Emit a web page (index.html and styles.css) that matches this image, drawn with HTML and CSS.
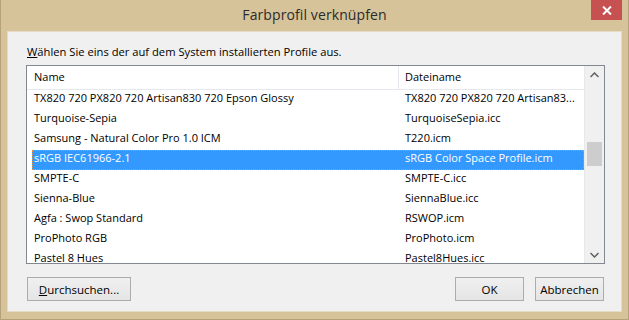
FILE: index.html
```html
<!DOCTYPE html>
<html>
<head>
    <meta charset="UTF-8">
    <title>Farbprofil verknüpfen</title>
    <link rel="stylesheet" href="styles.css">
</head>
<body>
    <div class="window">
        <div class="titlebar">
            <span></span>
            <span class="title">Farbprofil verknüpfen</span>
            <button class="close" type="button">
                <svg width="10" height="9" viewBox="0 0 10 9">
                    <path d="M1 0.5 L9 8.5 M9 0.5 L1 8.5" stroke="#fff" stroke-width="2"/>
                </svg>
            </button>
        </div>

        <div class="client">
            <p class="prompt"><u>W</u>ählen Sie eins der auf dem System installierten Profile aus.</p>

            <div class="listbox">
                <div class="list-main">
                    <div class="list-header">
                        <div class="col-name">Name</div>
                        <div class="col-file">Dateiname</div>
                    </div>
                    <div class="list-rows">
                        <div class="row"><span class="cell-name">TX820 720 PX820 720 Artisan830 720 Epson Glossy</span><span class="cell-file">TX820 720 PX820 720 Artisan83...</span></div>
                        <div class="row"><span class="cell-name">Turquoise-Sepia</span><span class="cell-file">TurquoiseSepia.icc</span></div>
                        <div class="row"><span class="cell-name">Samsung - Natural Color Pro 1.0 ICM</span><span class="cell-file">T220.icm</span></div>
                        <div class="row selected"><span class="cell-name">sRGB IEC61966-2.1</span><span class="cell-file">sRGB Color Space Profile.icm</span></div>
                        <div class="row"><span class="cell-name">SMPTE-C</span><span class="cell-file">SMPTE-C.icc</span></div>
                        <div class="row"><span class="cell-name">Sienna-Blue</span><span class="cell-file">SiennaBlue.icc</span></div>
                        <div class="row"><span class="cell-name">Agfa : Swop Standard</span><span class="cell-file">RSWOP.icm</span></div>
                        <div class="row"><span class="cell-name">ProPhoto RGB</span><span class="cell-file">ProPhoto.icm</span></div>
                        <div class="row"><span class="cell-name">Pastel 8 Hues</span><span class="cell-file">Pastel8Hues.icc</span></div>
                    </div>
                </div>
                <div class="scrollbar">
                    <div class="arrow">
                        <svg width="9" height="6" viewBox="0 0 9 6"><path d="M0.5 5 L4.5 1 L8.5 5" fill="none" stroke="#606060" stroke-width="1.5"/></svg>
                    </div>
                    <div class="track">
                        <div class="thumb"></div>
                    </div>
                    <div class="arrow">
                        <svg width="9" height="6" viewBox="0 0 9 6"><path d="M0.5 1 L4.5 5 L8.5 1" fill="none" stroke="#606060" stroke-width="1.5"/></svg>
                    </div>
                </div>
            </div>

            <div class="buttons">
                <button type="button" class="btn btn-browse"><u>D</u>urchsuchen...</button>
                <span class="spacer"></span>
                <button type="button" class="btn">OK</button>
                <button type="button" class="btn">Abbrechen</button>
            </div>
        </div>
    </div>
</body>
</html>
```

FILE: styles.css
```css
body {
    margin: 0;
    padding: 0;
    font-family: 'Open Sans', 'Noto Sans', sans-serif;
    font-size: 11px;
    color: #000;
}

.window {
    width: 629px;
    height: 320px;
    box-sizing: border-box;
    background-color: #d6c399;
    border: 1px solid #b5a27a;
    border-top: none;
    display: flex;
    flex-direction: column;
}

.titlebar {
    height: 31px;
    display: grid;
    grid-template-columns: 1fr auto 1fr;
    align-items: start;
}

.title {
    font-size: 14px;
    color: #2b2b2b;
    padding-top: 5px;
    letter-spacing: 0.1px;
}

.close {
    justify-self: end;
    margin-right: 6px;
    width: 31px;
    height: 20px;
    border: none;
    padding: 0;
    background-color: #c75050;
    display: flex;
    align-items: center;
    justify-content: center;
}

.client {
    flex: 1;
    margin: 0 6px 7px 6px;
    background-color: #f0f0f0;
    border: 1px solid #e6dcc6;
    padding: 0 16px 0 18px;
    display: flex;
    flex-direction: column;
}

.prompt {
    margin: 12px 0 0 1px;
    height: 21px;
    line-height: 15px;
    font-size: 11.2px;
}

.listbox {
    height: 199px;
    box-sizing: border-box;
    border: 1px solid #828790;
    background-color: #fff;
    display: flex;
    overflow: hidden;
}

.list-main {
    flex: 1;
    overflow: hidden;
}

.list-header {
    display: flex;
    height: 23px;
    border-bottom: 1px solid #e5e9ef;
    line-height: 22px;
}

.col-name {
    width: 364px;
    padding-left: 7px;
    border-right: 1px solid #e5e9ef;
}

.col-file {
    padding-left: 6px;
}

.row {
    display: flex;
    height: 20px;
    line-height: 14px;
    margin-left: 5px;
    box-sizing: border-box;
    border: 1px solid transparent;
    white-space: nowrap;
}

.cell-name {
    width: 365px;
    padding-left: 1px;
    overflow: hidden;
}

.cell-file {
    padding-left: 6px;
}

.row.selected {
    background-color: #3399ff;
    color: #fff;
    border: 1px dotted #e8903a;
}

.scrollbar {
    width: 19px;
    background-color: #f0f0f0;
    border-left: 1px solid #e8e8e8;
    display: flex;
    flex-direction: column;
}

.arrow {
    height: 17px;
    display: flex;
    align-items: center;
    justify-content: center;
}

.track {
    flex: 1;
    padding: 59px 2px 0 2px;
}

.thumb {
    height: 24px;
    background-color: #cdcdcd;
}

.buttons {
    display: flex;
    margin-top: 13px;
    padding-right: 1px;
    gap: 11px;
}

.spacer {
    flex: 1;
}

.btn {
    height: 24px;
    width: 69px;
    font-family: 'Open Sans', 'Noto Sans', sans-serif;
    font-size: 11.5px;
    color: #000;
    border: 1px solid #acacac;
    background: linear-gradient(#f0f0f0, #e5e5e5);
    padding: 0;
}

.btn-browse {
    width: 104px;
    margin-left: 1px;
}
```
